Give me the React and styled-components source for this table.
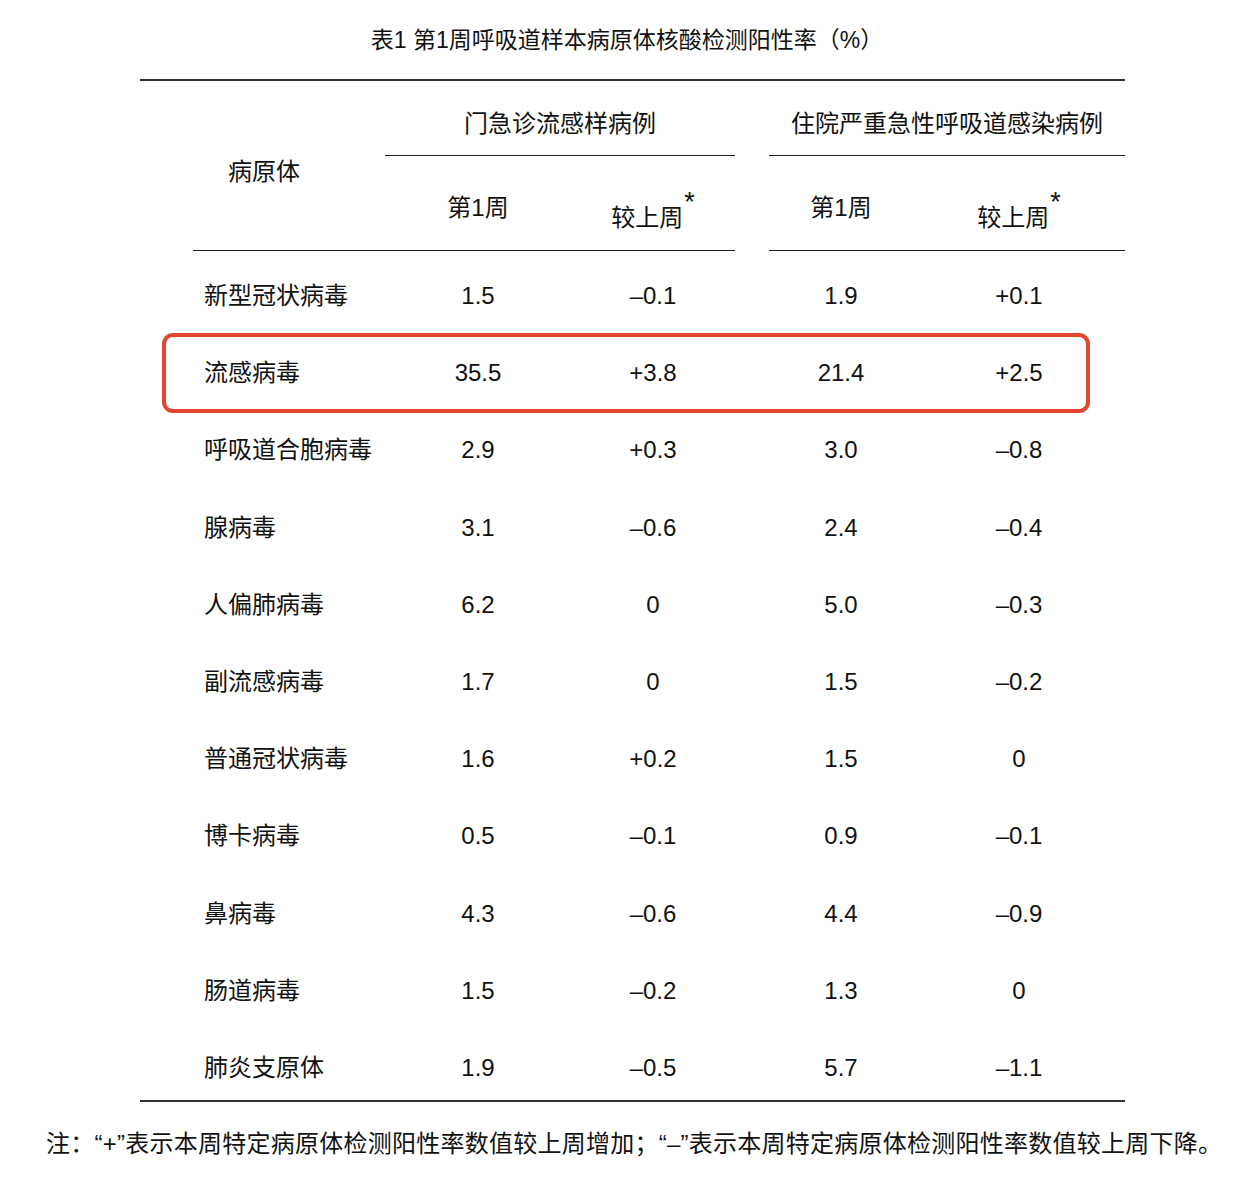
import React from 'react';
import styled, { createGlobalStyle } from 'styled-components';

const GlobalStyle = createGlobalStyle`
  body {
    margin: 0;
    background: #ffffff;
    font-family: "Liberation Sans", "Noto Sans CJK SC", sans-serif;
    color: #111111;
  }
`;

const COLUMNS = '245px 186px 164px 34px 144px 212px';

const Page = styled.div`
  width: 1254px;
  padding-top: 25px;
  padding-bottom: 40px;
`;

const Title = styled.h1`
  margin: 0;
  font-size: 23px;
  font-weight: 400;
  line-height: 30px;
  text-align: center;
`;

const Table = styled.div`
  width: 985px;
  margin: 24px 0 0 140px;
  border-top: 2.5px solid #333333;
  border-bottom: 2.5px solid #333333;
`;

const Head = styled.div`
  display: grid;
  grid-template-columns: ${COLUMNS};
  grid-template-rows: 75px 95px;
`;

const PathogenHead = styled.div`
  grid-column: 1;
  grid-row: 1 / 3;
  margin-left: 53px;
  padding: 76px 0 0 35px;
  font-size: 24px;
  line-height: 30px;
  border-bottom: 1.5px solid #222222;
`;

const GroupHead = styled.div`
  grid-row: 1;
  grid-column: ${(p) => p.$cols};
  display: flex;
  align-items: center;
  justify-content: center;
  padding-top: 12px;
  font-size: 24px;
  line-height: 30px;
  border-bottom: 1.5px solid #222222;
`;

const SubHead = styled.div`
  grid-row: 2;
  grid-column: ${(p) => p.$col};
  display: flex;
  justify-content: center;
  align-items: flex-start;
  padding-top: ${(p) => (p.$drop ? 47 : 37)}px;
  font-size: 24px;
  line-height: 30px;
  border-bottom: 1.5px solid #222222;
`;

const Spacer = styled.div`
  grid-row: 2;
  grid-column: 4;
`;

const Star = styled.span`
  font-size: 27px;
  line-height: 1;
  position: relative;
  top: -14px;
  margin-left: 1px;
`;

const Body = styled.div`
  padding-bottom: 0;
`;

const Row = styled.div`
  position: relative;
  display: grid;
  grid-template-columns: ${COLUMNS};
  height: 77.2px;
  box-sizing: border-box;
  padding-top: 13px;
  align-items: center;
  font-size: 24px;
  line-height: 30px;

  ${(p) =>
    p.$marked &&
    `
    &::after {
      content: '';
      position: absolute;
      top: 5px;
      bottom: -8px;
      left: 22px;
      right: 35px;
      border: 4.5px solid #e4452e;
      border-radius: 11px;
      pointer-events: none;
    }
  `}
`;

const NameCell = styled.div`
  padding-left: 64px;
`;

const NumCell = styled.div`
  grid-column: ${(p) => p.$col};
  text-align: center;
`;

const Note = styled.p`
  margin: 27px 0 0 46px;
  font-size: 24px;
  line-height: 30px;
  letter-spacing: 0.25px;
  white-space: nowrap;
`;

const rows = [
  ['新型冠状病毒', '1.5', '–0.1', '1.9', '+0.1'],
  ['流感病毒', '35.5', '+3.8', '21.4', '+2.5', true],
  ['呼吸道合胞病毒', '2.9', '+0.3', '3.0', '–0.8'],
  ['腺病毒', '3.1', '–0.6', '2.4', '–0.4'],
  ['人偏肺病毒', '6.2', '0', '5.0', '–0.3'],
  ['副流感病毒', '1.7', '0', '1.5', '–0.2'],
  ['普通冠状病毒', '1.6', '+0.2', '1.5', '0'],
  ['博卡病毒', '0.5', '–0.1', '0.9', '–0.1'],
  ['鼻病毒', '4.3', '–0.6', '4.4', '–0.9'],
  ['肠道病毒', '1.5', '–0.2', '1.3', '0'],
  ['肺炎支原体', '1.9', '–0.5', '5.7', '–1.1'],
];

export default function App() {
  return (
    <Page>
      <GlobalStyle />
      <Title>表1 第1周呼吸道样本病原体核酸检测阳性率（%）</Title>
      <Table>
        <Head>
          <PathogenHead>病原体</PathogenHead>
          <GroupHead $cols="2 / 4">门急诊流感样病例</GroupHead>
          <GroupHead $cols="5 / 7">住院严重急性呼吸道感染病例</GroupHead>
          <SubHead $col={2}>第1周</SubHead>
          <SubHead $col={3} $drop>
            较上周<Star>*</Star>
          </SubHead>
          <Spacer />
          <SubHead $col={5}>第1周</SubHead>
          <SubHead $col={6} $drop>
            较上周<Star>*</Star>
          </SubHead>
        </Head>
        <Body>
          {rows.map(([name, a, b, c, d, marked]) => (
            <Row key={name} $marked={marked}>
              <NameCell>{name}</NameCell>
              <NumCell $col={2}>{a}</NumCell>
              <NumCell $col={3}>{b}</NumCell>
              <NumCell $col={5}>{c}</NumCell>
              <NumCell $col={6}>{d}</NumCell>
            </Row>
          ))}
        </Body>
      </Table>
      <Note>
        注：“+”表示本周特定病原体检测阳性率数值较上周增加；“–”表示本周特定病原体检测阳性率数值较上周下降。
      </Note>
    </Page>
  );
}
